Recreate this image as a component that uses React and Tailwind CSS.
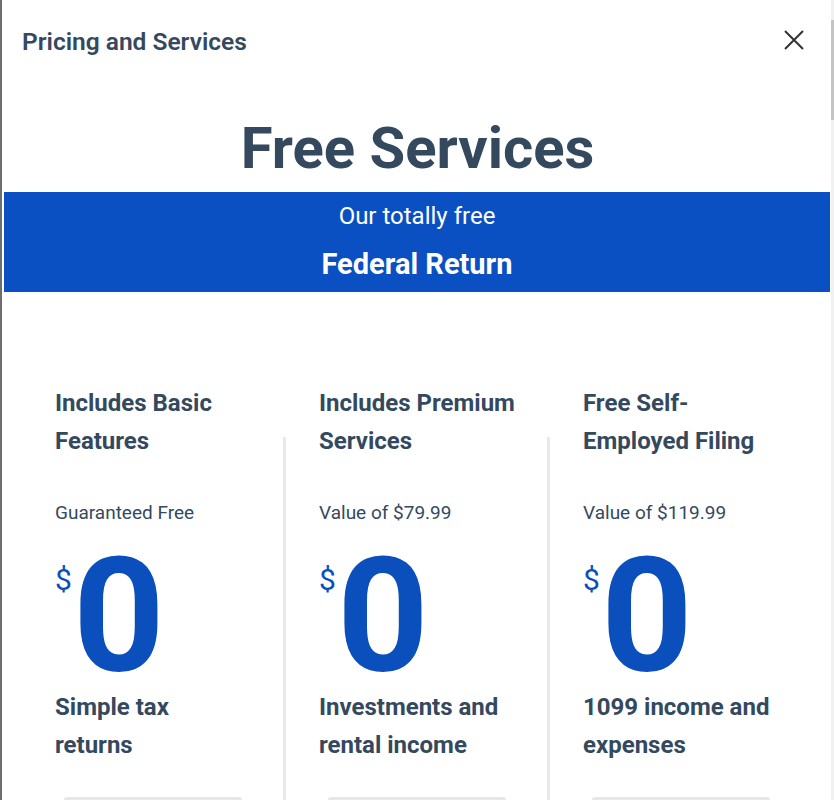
import React from 'react';

const plans = [
  {
    title: ['Includes Basic', 'Features'],
    sub: 'Guaranteed Free',
    desc: ['Simple tax', 'returns'],
  },
  {
    title: ['Includes Premium', 'Services'],
    sub: 'Value of $79.99',
    desc: ['Investments and', 'rental income'],
  },
  {
    title: ['Free Self-', 'Employed Filing'],
    sub: 'Value of $119.99',
    desc: ['1099 income and', 'expenses'],
  },
];

function PlanColumn({ plan }) {
  return (
    <div className="w-[261px] shrink-0 pl-[33px] pr-3 flex flex-col">
      <h3 className="text-[24px] leading-[38px] font-bold text-[#34495e] pt-[3px]">
        {plan.title.map((t) => (
          <div key={t}>{t}</div>
        ))}
      </h3>
      <p className="mt-[40px] text-[19px] leading-[26px] text-[#34495e]">{plan.sub}</p>
      <div className="mt-[23px] flex items-start text-[#0b4fbd]">
        <span className="mt-[16px] text-[30px] leading-none">$</span>
        <span className="ml-[1px] text-[160px] leading-[133px] font-bold">0</span>
      </div>
      <p className="mt-[6px] text-[24px] leading-[38px] font-bold text-[#34495e]">
        {plan.desc.map((t) => (
          <span key={t} className="block">{t}</span>
        ))}
      </p>
      <div className="mt-[33px] ml-[9px] w-[178px] h-[40px] shrink-0 rounded-t-[3px] bg-[#e5e7eb]" />
    </div>
  );
}

export default function App() {
  return (
    <div
      className="flex h-[800px] w-[834px] overflow-hidden bg-white"
      style={{ fontFamily: 'Roboto, "Liberation Sans", sans-serif' }}
    >
      <div className="w-[2px] shrink-0 bg-[#6e6e6e]" />

      <div className="flex-1 flex flex-col bg-white min-h-0">
        <div className="shrink-0 flex items-center justify-between h-[84px] pl-[20px] pr-[26px]">
          <h2 className="text-[24.5px] font-semibold text-[#34495e]">
            Pricing and Services
          </h2>
          <button className="w-[22px] h-[22px] flex items-center justify-center -mt-[5px] text-[#333]">
            <svg width="20" height="20" viewBox="0 0 20 20" fill="none" stroke="currentColor" strokeWidth="2">
              <path d="M1 1L19 19M19 1L1 19" />
            </svg>
          </button>
        </div>

        <h1 className="shrink-0 text-center text-[58px] leading-[64px] font-bold text-[#34495e] mt-[32px] pl-[2px]">
          Free Services
        </h1>

        <div className="shrink-0 mt-[12px] ml-[2px] mr-[1px] h-[100px] bg-[#0a50c2] text-white text-center flex flex-col pt-[10px]">
          <p className="text-[24px] leading-[28px]">Our totally free</p>
          <p className="mt-[19px] text-[29px] leading-[30px] font-bold">Federal Return</p>
        </div>

        <div className="shrink-0 mt-[89px] flex pl-[20px]">
          <PlanColumn plan={plans[0]} />
          <div className="w-[3px] shrink-0 mt-[56px] bg-[#e8e9ee]" />
          <PlanColumn plan={plans[1]} />
          <div className="w-[3px] shrink-0 mt-[56px] bg-[#e8e9ee]" />
          <PlanColumn plan={plans[2]} />
        </div>
      </div>

      <div className="w-[3px] shrink-0 bg-[#f1f1f1] flex flex-col">
        <div className="mt-[20px] h-[100px] bg-[#c4c4c4]" />
      </div>
    </div>
  );
}
